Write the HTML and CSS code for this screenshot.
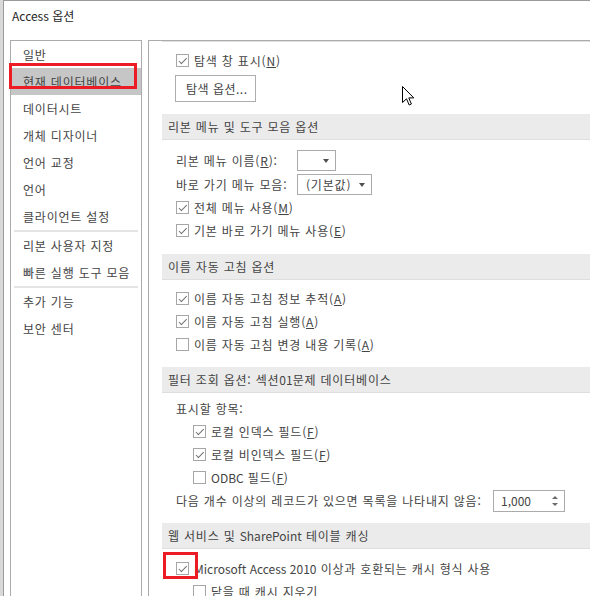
FILE: index.html
```html
<!DOCTYPE html>
<html lang="ko">

<head>
    <meta charset="utf-8">
    <meta name="viewport" content="width=device-width, initial-scale=1.0">
    <title>Access 옵션</title>
    <link rel="stylesheet" href="styles.css">
</head>

<body>

    <div class="dialog">
        <div class="titlebar">Access 옵션</div>

        <div class="panes">
            <nav class="sidenav">
                <div class="navitem">일반</div>
                <div class="navitem selected">현재 데이터베이스<span class="mark mark-nav"></span></div>
                <div class="navitem">데이터시트</div>
                <div class="navitem">개체 디자이너</div>
                <div class="navitem">언어 교정</div>
                <div class="navitem">언어</div>
                <div class="navitem">클라이언트 설정</div>
                <div class="navsep"></div>
                <div class="navitem">리본 사용자 지정</div>
                <div class="navitem">빠른 실행 도구 모음</div>
                <div class="navsep"></div>
                <div class="navitem">추가 기능</div>
                <div class="navitem">보안 센터</div>
            </nav>

            <section class="options">
                <div class="topedge"></div>

                <div class="row first"><span class="box on"></span>탐색 창 표시(<u>N</u>)</div>
                <button class="btn">탐색 옵션...</button>

                <h3 class="group">리본 메뉴 및 도구 모음 옵션</h3>
                <div class="row pick after-group">
                    <span class="picklabel">리본 메뉴 이름(<u>R</u>):</span>
                    <span class="select small"></span>
                </div>
                <div class="row pick">
                    <span class="picklabel">바로 가기 메뉴 모음:</span>
                    <span class="select wide">(기본값)</span>
                </div>
                <div class="row"><span class="box on"></span>전체 메뉴 사용(<u>M</u>)</div>
                <div class="row"><span class="box on"></span>기본 바로 가기 메뉴 사용(<u>E</u>)</div>

                <h3 class="group">이름 자동 고침 옵션</h3>
                <div class="row after-group"><span class="box on"></span>이름 자동 고침 정보 추적(<u>A</u>)</div>
                <div class="row"><span class="box on"></span>이름 자동 고침 실행(<u>A</u>)</div>
                <div class="row"><span class="box"></span>이름 자동 고침 변경 내용 기록(<u>A</u>)</div>

                <h3 class="group g-filter">필터 조회 옵션: 섹션<span class="lat">01</span>문제 데이터베이스</h3>
                <div class="row caption">표시할 항목:</div>
                <div class="row sub"><span class="box on"></span>로컬 인덱스 필드(<u>F</u>)</div>
                <div class="row sub"><span class="box on"></span>로컬 비인덱스 필드(<u>F</u>)</div>
                <div class="row sub"><span class="box"></span><span class="lat">ODBC</span>&nbsp;필드(<u>F</u>)</div>
                <div class="row">
                    <span class="spinlabel">다음 개수 이상의 레코드가 있으면 목록을 나타내지 않음:</span>
                    <span class="spinner"><span class="lat">1,000</span><span class="spin-up"></span><span class="spin-down"></span></span>
                </div>

                <h3 class="group g-web">웹 서비스 및 <span class="lat">SharePoint</span> 테이블 캐싱</h3>
                <div class="row last-check"><span class="box on"></span><span class="lat">Microsoft Access 2010</span>&nbsp;이상과 호환되는 캐시 형식 사용<span class="mark mark-check"></span></div>
                <div class="row sub"><span class="box"></span>닫을 때 캐시 지우기</div>
            </section>
        </div>
    </div>

    <svg class="cursor" width="13" height="20" viewBox="0 0 13 20">
        <path d="M0.5 0.5 V16.5 L4.5 12.8 L7.2 19 L9.4 18 L6.8 11.9 H11.8 Z" fill="#fff" stroke="#000" stroke-width="1" stroke-linejoin="miter" />
    </svg>

</body>

</html>
```

FILE: styles.css
```css
body {
    margin: 0;
    height: 596px;
    overflow: hidden;
    position: relative;
    background: #d9d9d9;
    font-family: "Noto Sans CJK KR", "Noto Sans", sans-serif;
    font-size: 12px;
    letter-spacing: 0.8px;
    color: #444;
}

.lat {
    letter-spacing: 0;
}

.dialog {
    margin-left: 3px;
    padding-left: 6px;
    height: 640px;
    background: #fff;
    border-left: 1px solid #9b9b9b;
    border-top: 1px solid #9b9b9b;
}

.titlebar {
    height: 39px;
    line-height: 30px;
    padding-left: 2px;
    letter-spacing: 0;
    color: #262626;
}

.panes {
    display: flex;
    gap: 6px;
    height: 600px;
}

/* left menu */
.sidenav {
    flex: none;
    width: 132px;
    box-sizing: border-box;
    border: 1px solid #ababab;
    border-bottom: none;
}

.navitem {
    position: relative;
    height: 27px;
    line-height: 27px;
    padding-left: 12px;
    white-space: nowrap;
}

.navitem.selected {
    background: #c6c6c6;
}

.navsep {
    height: 2px;
    margin: 0 3px;
    background: #e4e4e4;
}

.mark {
    position: absolute;
    box-sizing: border-box;
    border: 3px solid #ec1c24;
}

.mark-nav {
    left: -2px;
    top: -5px;
    width: 128px;
    height: 26px;
}

/* right pane */
.options {
    flex: none;
    width: 470px;
    border-left: 1px solid #ababab;
    border-top: 1px solid #ababab;
}

.topedge {
    height: 1px;
    margin-left: 13px;
    background: #e2e2e2;
}

.row {
    position: relative;
    display: flex;
    align-items: center;
    height: 23px;
    margin-left: 27px;
    white-space: nowrap;
}

.row.first {
    margin-top: 7px;
}

.row.after-group {
    margin-top: 7px;
}

.row.pick {
    height: 24px;
}

.row.pick.after-group {
    margin-top: 8px;
}

.row.caption {
    margin-top: 4px;
}

.row.sub {
    margin-left: 44px;
}

.row.last-check {
    margin-top: 8px;
}

u {
    text-decoration: underline;
    text-underline-offset: 1px;
}

.box {
    position: relative;
    flex: none;
    width: 13px;
    height: 13px;
    box-sizing: border-box;
    margin-right: 5px;
    border: 1px solid #a6a6a6;
    background: #fff;
}

.box.on::after {
    content: "";
    position: absolute;
    left: 3.5px;
    top: 0.5px;
    width: 3px;
    height: 6.5px;
    border: solid #707070;
    border-width: 0 1.5px 1.5px 0;
    transform: rotate(45deg);
}

.btn {
    display: block;
    margin: 3px 0 0 26px;
    width: 81px;
    height: 27px;
    padding: 0 0 0 10px;
    text-align: left;
    background: #fff;
    border: 1px solid #adadad;
    font: inherit;
    letter-spacing: 0.5px;
    color: inherit;
}

.group {
    margin: 12px 0 0 13px;
    height: 25px;
    line-height: 25px;
    padding-left: 6px;
    background: #ebebeb;
    border-bottom: 1px solid #dedede;
    font-size: 12px;
    font-weight: normal;
    color: #444;
}

.group.g-filter,
.group.g-web {
    margin-top: 11px;
}

.picklabel {
    width: 121px;
    flex: none;
}

.select {
    position: relative;
    box-sizing: border-box;
    height: 21px;
    line-height: 19px;
    padding-left: 8px;
    border: 1px solid #ababab;
    background: #fff;
}

.select.small {
    width: 39px;
}

.select.wide {
    width: 75px;
}

.select::after {
    content: "";
    position: absolute;
    right: 6px;
    top: 8px;
    border-left: 3.5px solid transparent;
    border-right: 3.5px solid transparent;
    border-top: 4px solid #505050;
}

.spinlabel {
    width: 317px;
    flex: none;
}

.spinner {
    position: relative;
    box-sizing: border-box;
    width: 72px;
    height: 22px;
    line-height: 20px;
    padding-left: 7px;
    border: 1px solid #ababab;
    background: #fff;
}

.spin-up,
.spin-down {
    position: absolute;
    right: 6px;
    border-left: 3px solid transparent;
    border-right: 3px solid transparent;
}

.spin-up {
    top: 5px;
    border-bottom: 3px solid #6a6a6a;
}

.spin-down {
    top: 12px;
    border-top: 3px solid #6a6a6a;
}

.mark-check {
    left: -13px;
    top: -5px;
    width: 35px;
    height: 27px;
}

.cursor {
    position: absolute;
    left: 402px;
    top: 86px;
}
```
